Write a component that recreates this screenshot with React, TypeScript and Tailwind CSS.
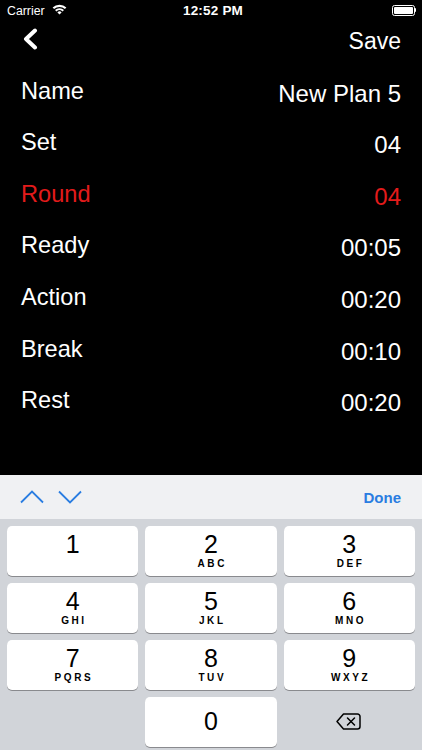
import React from "react";

const rows: { label: string; value: string; red?: boolean }[] = [
  { label: "Name", value: "New Plan 5" },
  { label: "Set", value: "04" },
  { label: "Round", value: "04", red: true },
  { label: "Ready", value: "00:05" },
  { label: "Action", value: "00:20" },
  { label: "Break", value: "00:10" },
  { label: "Rest", value: "00:20" },
];

const keys: { d: string; l?: string }[] = [
  { d: "1", l: "" },
  { d: "2", l: "ABC" },
  { d: "3", l: "DEF" },
  { d: "4", l: "GHI" },
  { d: "5", l: "JKL" },
  { d: "6", l: "MNO" },
  { d: "7", l: "PQRS" },
  { d: "8", l: "TUV" },
  { d: "9", l: "WXYZ" },
];

function Key({ d, l }: { d: string; l?: string }) {
  return (
    <div className="h-[50px] rounded-[5px] bg-white shadow-[0_1px_0_#898a8e] flex flex-col items-center">
      <div className="mt-[6px] text-[25px] leading-[25px] text-black">{d}</div>
      {l !== undefined && (
        <div className="mt-[2px] text-[10px] leading-[10px] font-bold tracking-[2.6px] pl-[2.6px] text-black">
          {l}
        </div>
      )}
    </div>
  );
}

export default function App() {
  return (
    <div
      className="w-[422px] h-[750px] flex flex-col bg-black overflow-hidden"
      style={{ fontFamily: '"Liberation Sans", Arial, sans-serif' }}
    >
      {/* Status bar */}
      <div className="h-[20px] relative flex items-center text-white">
        <div className="flex items-center pl-[7px] gap-[7px]">
          <span className="text-[12.3px] leading-[14px] pt-[1px]">Carrier</span>
          <svg width="15" height="11" viewBox="0 0 15 11" className="mt-[-1px]">
            <path d="M0.6 3.6 A10 10 0 0 1 14.4 3.6 L12.9 5.1 A8 8 0 0 0 2.1 5.1 Z" fill="white" />
            <path d="M3 6 A6.5 6.5 0 0 1 12 6 L10.5 7.5 A4.4 4.4 0 0 0 4.5 7.5 Z" fill="white" />
            <path d="M5.4 8.4 A3 3 0 0 1 9.6 8.4 L7.5 10.6 Z" fill="white" />
          </svg>
        </div>
        <div className="absolute left-0 right-0 top-0 h-[20px] flex items-center justify-center">
          <span className="text-[13.5px] leading-[14px] font-bold tracking-[0.2px] pt-[1px] ml-[4px]">12:52 PM</span>
        </div>
        <div className="absolute right-[6px] top-[5px] flex items-center">
          <div className="w-[23px] h-[10.5px] rounded-[2.5px] border border-white p-[1px]">
            <div className="w-full h-full bg-white rounded-[1px]" />
          </div>
          <div className="w-[1.5px] h-[4px] bg-white rounded-r-[1px]" />
        </div>
      </div>

      {/* Nav bar */}
      <div className="h-[58.7px] flex items-start justify-between pl-[22px] pr-[21px] text-white">
        <svg width="16" height="24" viewBox="0 0 16 24" className="mt-[8px]">
          <path d="M13 2.5 L4 11 L13 19.5" fill="none" stroke="white" strokeWidth="4" strokeLinecap="round" strokeLinejoin="round" />
        </svg>
        <span className="mt-[9.5px] text-[23px] leading-[23px]">Save</span>
      </div>

      {/* Rows */}
      <div className="flex-1 flex flex-col pl-[21px] pr-[21px]">
        {rows.map((r) => (
          <div
            key={r.label}
            className={`h-[51.6px] flex items-start justify-between ${r.red ? "text-[#e31b1b]" : "text-white"}`}
          >
            <span className="text-[23.6px] leading-[24px]">{r.label}</span>
            <span className="mt-[3px] text-[24px] leading-[24px]">{r.value}</span>
          </div>
        ))}
      </div>

      {/* Toolbar */}
      <div className="h-[44px] bg-[#f0f1f3] flex items-center justify-between pl-[20px] pr-[21px]">
        <div className="flex items-center gap-[14px] mt-[-1px]">
          <svg width="24" height="14" viewBox="0 0 24 14">
            <path d="M1 12.5 L12 1.5 L23 12.5" fill="none" stroke="#2a7de1" strokeWidth="1.8" />
          </svg>
          <svg width="24" height="14" viewBox="0 0 24 14">
            <path d="M1 1.5 L12 12.5 L23 1.5" fill="none" stroke="#2a7de1" strokeWidth="1.8" />
          </svg>
        </div>
        <span className="text-[15px] leading-[16px] font-bold text-[#2a7de1] mt-[1px]">Done</span>
      </div>

      {/* Keypad */}
      <div className="h-[231px] bg-[#d1d4d9] pt-[7px] px-[7px] pb-[3px]">
        <div className="grid grid-cols-3 gap-x-[7px] gap-y-[7px]">
          {keys.map((k) => (
            <Key key={k.d} d={k.d} l={k.l === "" ? undefined : k.l} />
          ))}
          <div className="h-[50px]" />
          <div className="h-[50px] rounded-[5px] bg-white shadow-[0_1px_0_#898a8e] flex items-center justify-center">
            <span className="text-[25px] leading-[25px] text-black mt-[-1px]">0</span>
          </div>
          <div className="h-[50px] flex items-center justify-center">
            <svg width="25" height="17" viewBox="0 0 25 17" className="mt-[-2px] ml-[-1px]">
              <path
                d="M7.5 1 H21.5 A2.5 2.5 0 0 1 24 3.5 V13.5 A2.5 2.5 0 0 1 21.5 16 H7.5 L1 8.5 Z"
                fill="none"
                stroke="black"
                strokeWidth="1.5"
                strokeLinejoin="round"
              />
              <path d="M11.5 5 L18.5 12 M18.5 5 L11.5 12" stroke="black" strokeWidth="1.5" strokeLinecap="round" />
            </svg>
          </div>
        </div>
      </div>
    </div>
  );
}
